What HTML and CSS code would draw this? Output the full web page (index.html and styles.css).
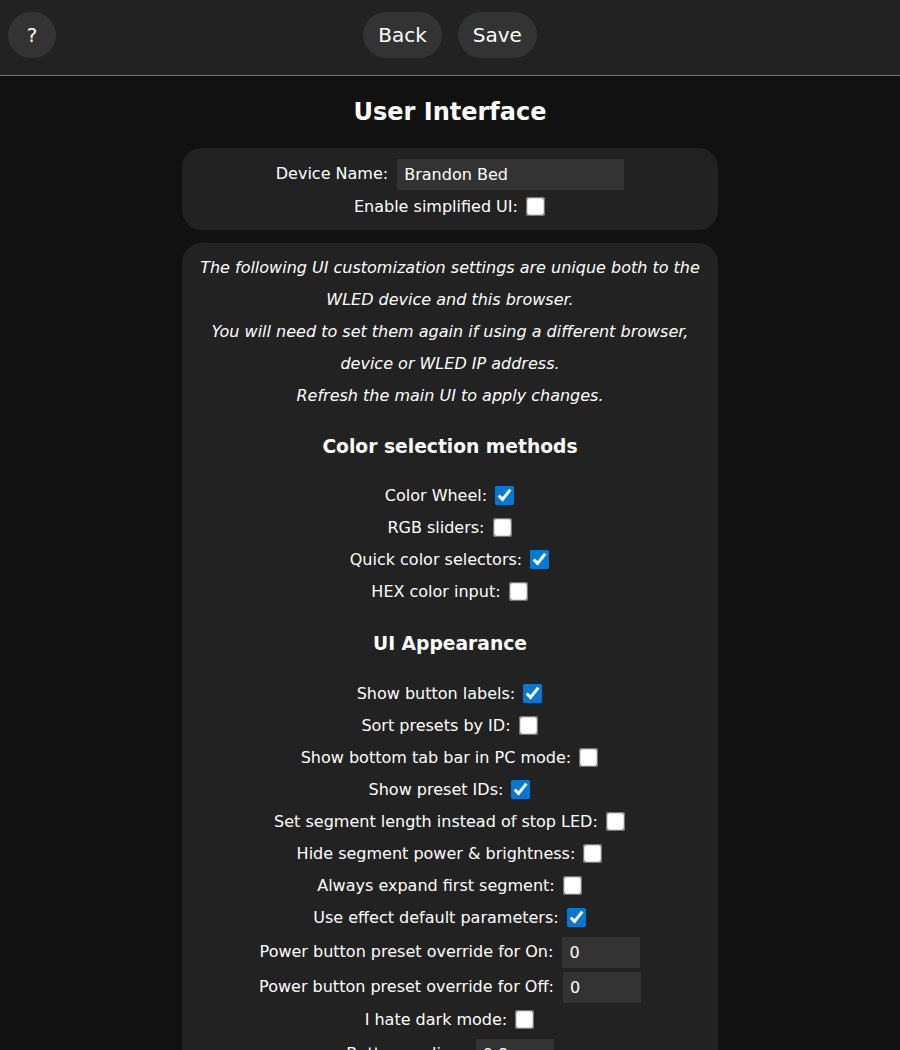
FILE: index.html
```
<!DOCTYPE html>
<html>
<head>
    <title>UI Settings</title>
    <link rel="stylesheet" href="styles.css">
</head>
<body>
    <div class="toprow">
        <button class="btn help">?</button>
        <div class="actions">
            <button class="btn">Back</button>
            <button class="btn">Save</button>
        </div>
    </div>

    <h2>User Interface</h2>

    <div class="sec">
        <div class="row tall">Device Name: <input type="text" class="name" value="Brandon Bed"></div>
        <div class="row">Enable simplified UI: <input type="checkbox"></div>
    </div>

    <div class="sec main">
        <p class="note">The following UI customization settings are unique both to the WLED device and this browser.<br>
        You will need to set them again if using a different browser, device or WLED IP address.<br>
        Refresh the main UI to apply changes.</p>

        <h3>Color selection methods</h3>
        <div class="row">Color Wheel: <input type="checkbox" checked></div>
        <div class="row">RGB sliders: <input type="checkbox"></div>
        <div class="row">Quick color selectors: <input type="checkbox" checked></div>
        <div class="row">HEX color input: <input type="checkbox"></div>

        <h3 class="wide">UI Appearance</h3>
        <div class="row">Show button labels: <input type="checkbox" checked></div>
        <div class="row">Sort presets by ID: <input type="checkbox"></div>
        <div class="row">Show bottom tab bar in PC mode: <input type="checkbox"></div>
        <div class="row">Show preset IDs: <input type="checkbox" checked></div>
        <div class="row">Set segment length instead of stop LED: <input type="checkbox"></div>
        <div class="row">Hide segment power &amp; brightness: <input type="checkbox"></div>
        <div class="row">Always expand first segment: <input type="checkbox"></div>
        <div class="row">Use effect default parameters: <input type="checkbox" checked></div>
        <div class="row tall">Power button preset override for On: <input type="number" class="num" value="0"></div>
        <div class="row tall">Power button preset override for Off: <input type="number" class="num" value="0"></div>
        <div class="row">I hate dark mode: <input type="checkbox"></div>
        <div class="row tall">Button scaling: <input type="number" class="num" value="0.8"></div>
    </div>
</body>
</html>
```

FILE: styles.css
```
body {
    font-family: "DejaVu Sans", Verdana, sans-serif;
    font-size: 16px;
    background: #111;
    color: #fff;
    text-align: center;
    line-height: 32px;
    margin: 0;
}
.toprow {
    position: relative;
    height: 75px;
    background: #222;
    border-bottom: 1px solid #777;
}
.actions {
    display: flex;
    justify-content: center;
    gap: 16px;
    padding-top: 12px;
}
.btn {
    background: #333;
    color: #fff;
    font-family: "DejaVu Sans", Verdana, sans-serif;
    font-size: 20px;
    height: 46px;
    line-height: 46px;
    padding: 0 15px;
    border: none;
    border-radius: 24px;
    cursor: pointer;
}
.help {
    position: absolute;
    left: 8px;
    top: 12px;
    width: 48px;
    padding: 0;
}
h2 {
    font-size: 24px;
    line-height: 32px;
    margin: 20px 0 20px;
}
.sec {
    background: #222;
    border-radius: 20px;
    width: 536px;
    box-sizing: border-box;
    margin: 0 auto 13px;
    padding: 8px 8px 7px;
}
.sec.main {
    padding-top: 9px;
}
.note {
    font-style: italic;
    margin: 0;
}
h3 {
    font-size: 18.7px;
    line-height: 32px;
    margin: 19px 0 17px;
}
h3.wide {
    margin: 20px 0 18px;
}
.row {
    height: 32px;
    white-space: nowrap;
}
.row.tall {
    height: 35px;
    line-height: 35px;
}
input {
    background: #333;
    color: #fff;
    font-family: "DejaVu Sans", Verdana, sans-serif;
    font-size: 16px;
    border: none;
    box-sizing: border-box;
    height: 31px;
    padding: 0 7px;
    vertical-align: middle;
    outline: none;
}
input.name {
    width: 227px;
    margin-left: 4px;
}
input.num {
    width: 78px;
    margin-left: 4px;
}
input[type="checkbox"] {
    height: 13px;
    width: 13px;
    padding: 0;
    transform: scale(1.5);
    margin: 0 4px 3px 6px;
    vertical-align: middle;
    accent-color: #0078d4;
}
input[type="number"]::-webkit-inner-spin-button {
    display: none;
}
```
